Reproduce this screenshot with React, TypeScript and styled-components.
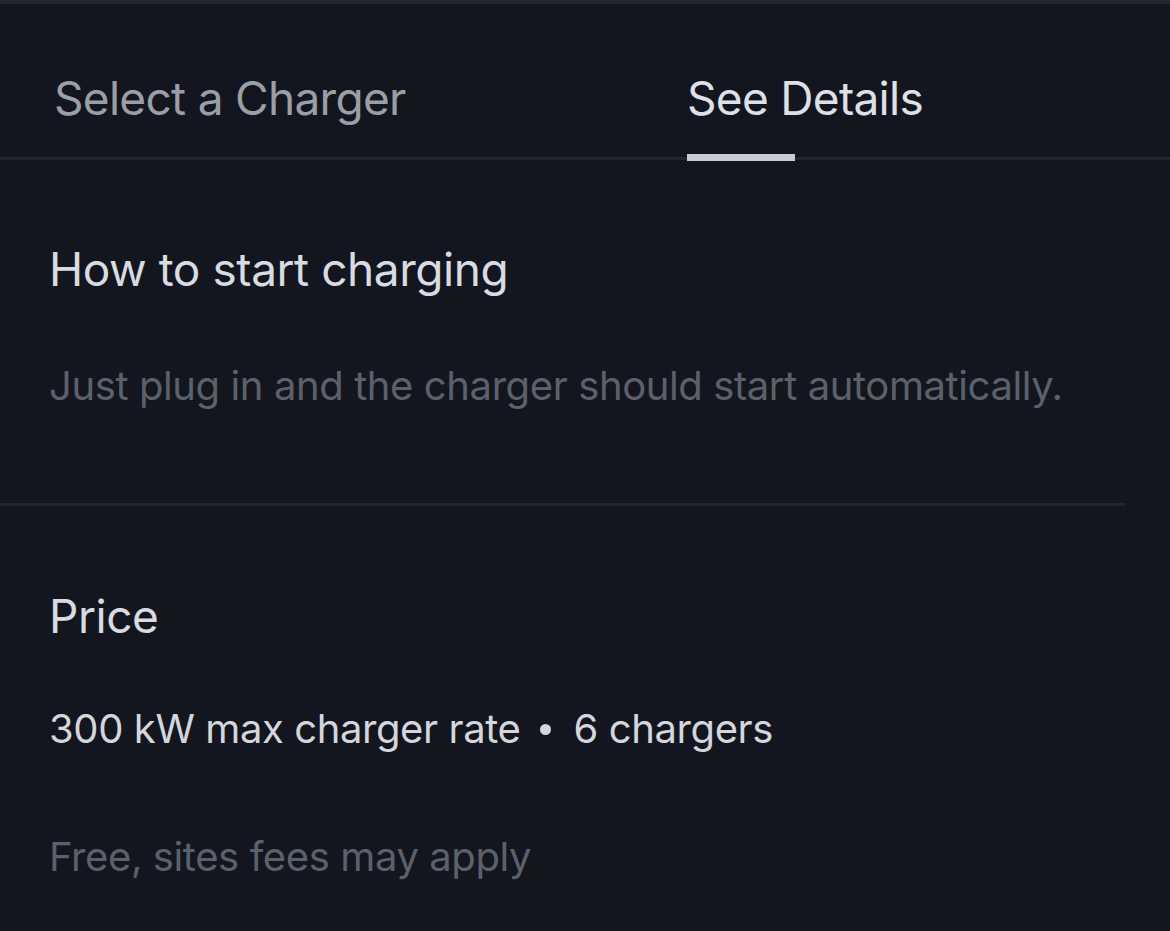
import styled, { createGlobalStyle } from 'styled-components';

const GlobalStyle = createGlobalStyle`
  html, body {
    margin: 0;
    padding: 0;
    background: #13161e;
  }
  body {
    font-family: Inter, "Noto Sans", sans-serif;
    -webkit-font-smoothing: antialiased;
  }
`;

const Screen = styled.div`
  width: 1170px;
  height: 931px;
  background: #13161e;
  border-top: 4px solid #22272f;
  box-sizing: border-box;
  overflow: hidden;
`;

const TabBar = styled.div`
  display: grid;
  grid-template-columns: 633px 1fr;
  height: 153px;
  border-bottom: 3px solid #22262e;
`;

const Tab = styled.div<{ $active?: boolean; $pad: number }>`
  position: relative;
  display: flex;
  align-items: flex-end;
  padding: 0 0 31px ${({ $pad }) => $pad}px;
  font-size: 46px;
  line-height: 56px;
  letter-spacing: -0.7px;
  color: ${({ $active }) => ($active ? '#dde0e6' : '#9a9ea6')};

  &::after {
    content: '';
    display: ${({ $active }) => ($active ? 'block' : 'none')};
    position: absolute;
    left: ${({ $pad }) => $pad}px;
    width: 108px;
    bottom: -4px;
    height: 7px;
    background: #c8ccd4;
  }
`;

const Section = styled.section<{ $divider?: boolean; $top: number; $bottom: number }>`
  padding: ${({ $top }) => $top}px 0 ${({ $bottom }) => $bottom}px 49px;
  width: 1125px;
  box-sizing: border-box;
  border-bottom: ${({ $divider }) => ($divider ? '3px solid #22262e' : 'none')};
`;

const Title = styled.h2`
  margin: 0;
  font-size: 46px;
  font-weight: 400;
  line-height: 52px;
  letter-spacing: -0.45px;
  color: #d8dbe1;
`;

const Body = styled.p<{ $muted?: boolean; $gap: number }>`
  margin: ${({ $gap }) => $gap}px 0 0;
  font-size: 40px;
  line-height: 48px;
  letter-spacing: -0.4px;
  color: ${({ $muted }) => ($muted ? '#5b616b' : '#d3d6dc')};
`;

const Dot = styled.span`
  display: inline-block;
  width: 11px;
  height: 11px;
  border-radius: 50%;
  background: #d3d6dc;
  margin: 0 22px 0 20px;
  vertical-align: middle;
  position: relative;
  top: -3px;
`;

export default function App() {
  return (
    <>
      <GlobalStyle />
      <Screen>
        <TabBar>
          <Tab $pad={54}>Select a Charger</Tab>
          <Tab $active $pad={54}>
            See Details
          </Tab>
        </TabBar>
        <Section $divider $top={83} $bottom={93}>
          <Title>How to start charging</Title>
          <Body $muted $gap={67}>
            Just plug in and the charger should start automatically.
          </Body>
        </Section>
        <Section $top={84} $bottom={0}>
          <Title>Price</Title>
          <Body $gap={63}>
            300 kW max charger rate<Dot />6 chargers
          </Body>
          <Body $muted $gap={80}>
            Free, sites fees may apply
          </Body>
        </Section>
      </Screen>
    </>
  );
}
